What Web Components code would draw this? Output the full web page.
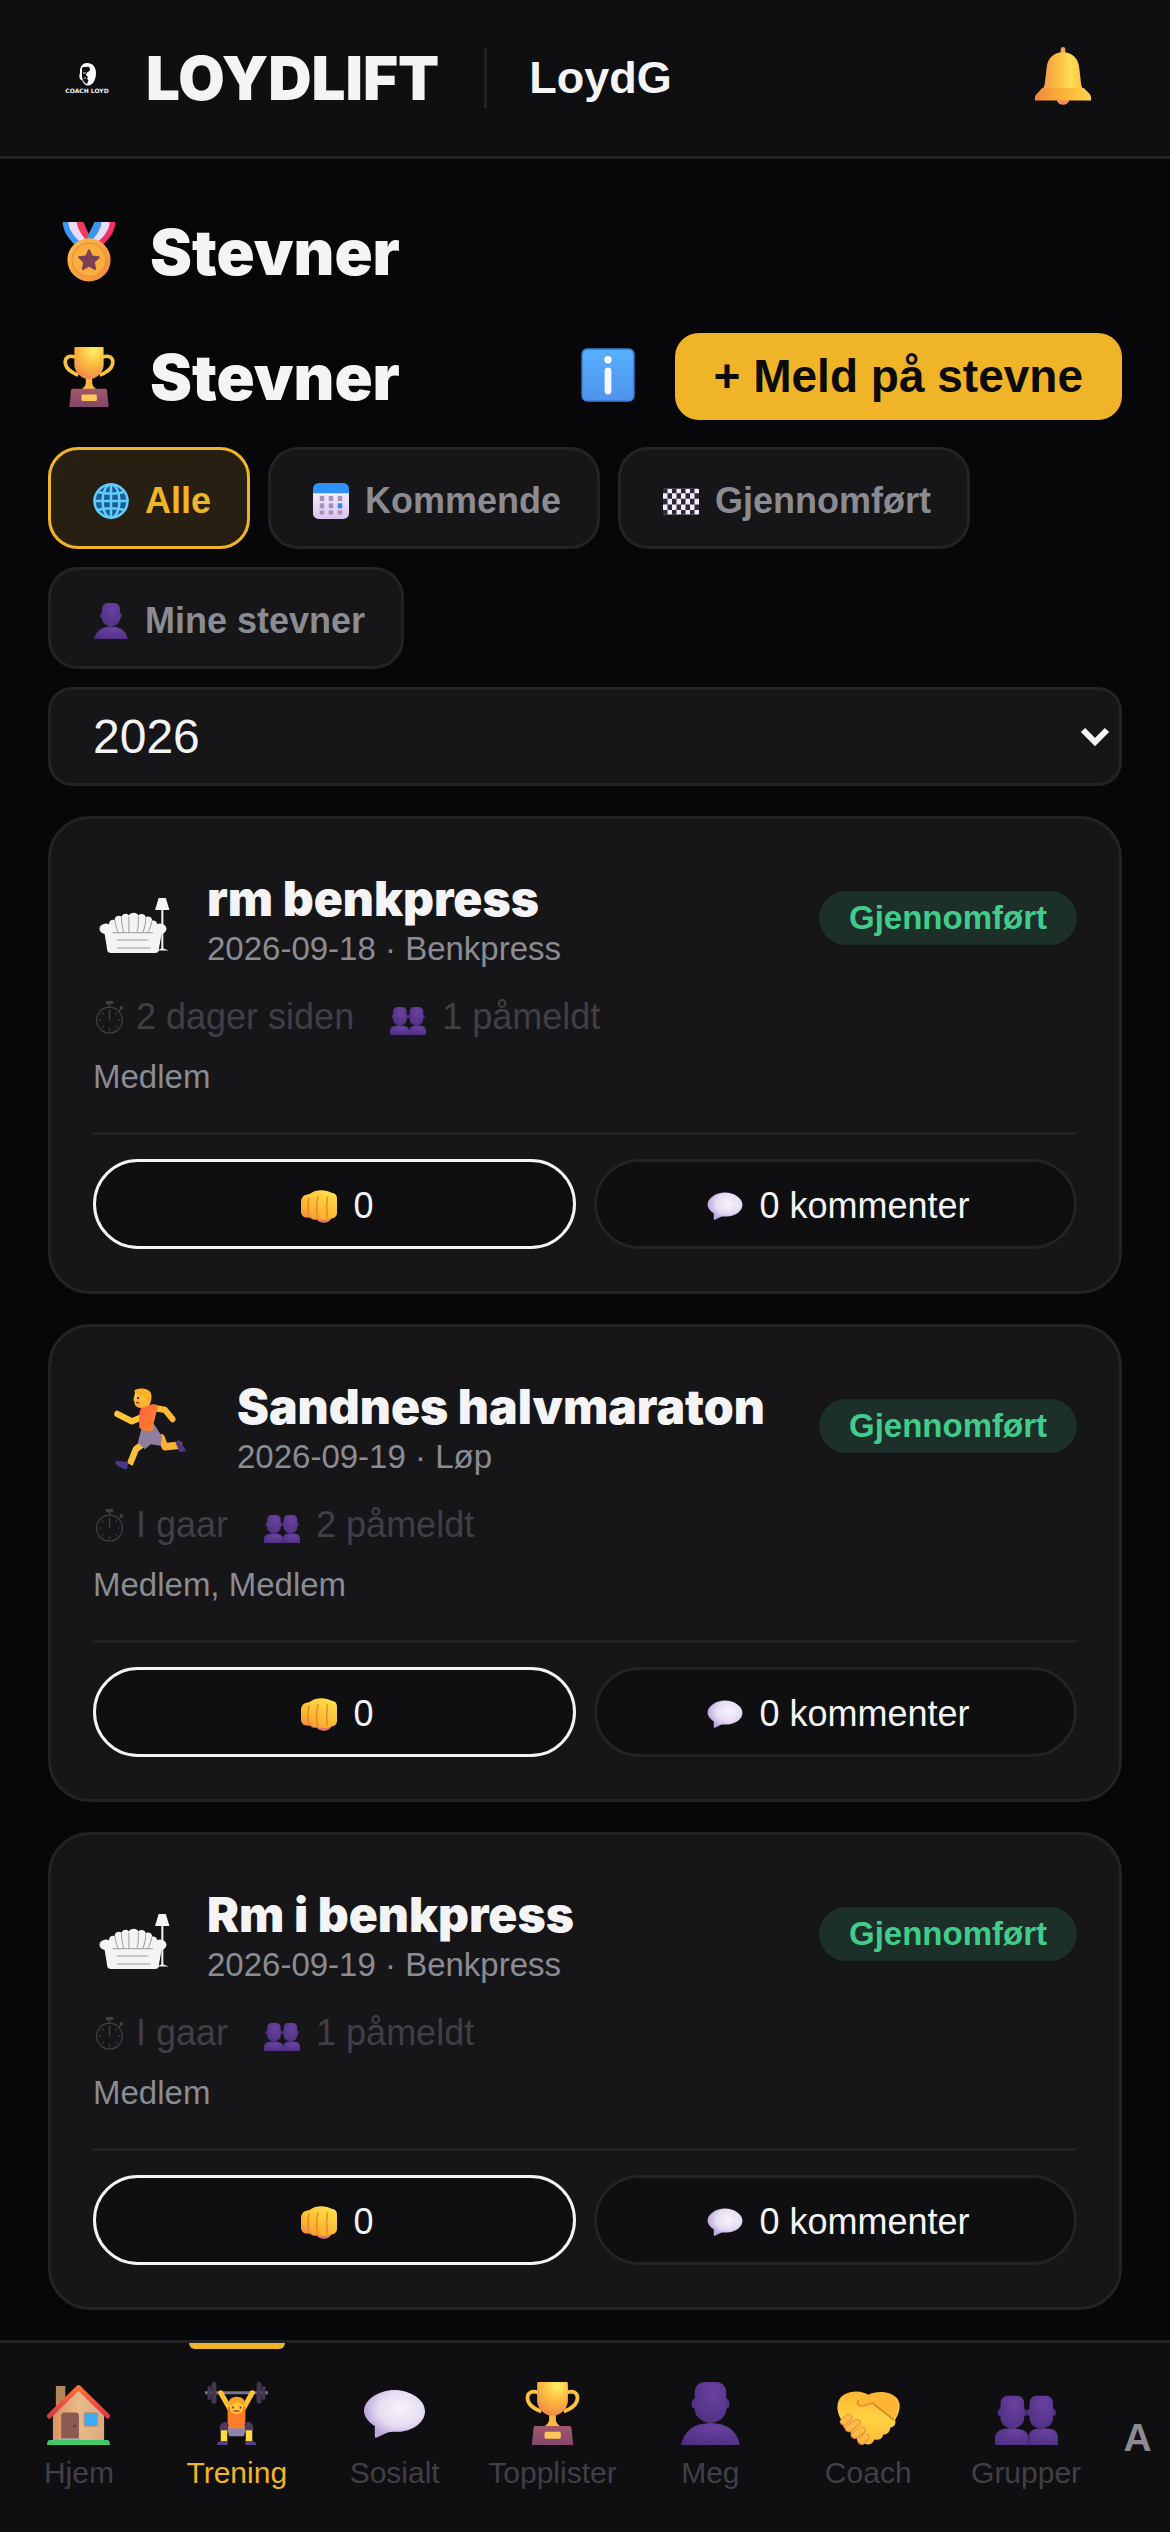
<!DOCTYPE html>
<html lang="no">
<head>
<meta charset="utf-8">
<meta name="viewport" content="width=device-width, initial-scale=1">
<title>Loydlift - Stevner</title>
<style>
  :root {
    --bg: #070709;
    --bar: #0f0f11;
    --card: #161618;
    --line: #232326;
    --text: #f4f4f6;
    --muted: #8b8b93;
    --dim: #3f3f45;
    --accent: #f0b429;
    --display: Inter, "Arial Black", "Liberation Sans", sans-serif;
  }
  body {
    margin: 0;
    background: var(--bg);
    color: var(--text);
    font-family: "Liberation Sans", Arial, sans-serif;
  }
</style>
</head>
<body>
<loyd-app></loyd-app>

<script>
const ICONS = {
  bell: `
    <defs>
      <linearGradient id="a" x1="0" x2="1"><stop offset="0" stop-color="#ef9256"/><stop offset=".3" stop-color="#f9b341"/><stop offset=".65" stop-color="#ffdd55"/><stop offset="1" stop-color="#fbb93a"/></linearGradient>
      <linearGradient id="b" x1="0" x2="1"><stop offset="0" stop-color="#f0873f"/><stop offset=".5" stop-color="#fbb237"/><stop offset="1" stop-color="#ffd34a"/></linearGradient>
    </defs>
    <path d="M12.500 28.500a3.600 3.700 0 0 0 7 0z" fill="#ef8a5a"/>
    <rect x="14.700" y="-.5" width="2.600" height="5" rx="1.300" fill="#f5a73c"/>
    <path d="M16 2.300c4.800 0 8.300 3 8.900 8.200l1 8.500c.3 3 1.400 4 3.300 6.500H2.800c2.200-2.600 3-4.300 3.300-7.300l.9-7.500C7.500 5.300 11.200 2.300 16 2.300z" fill="url(#a)"/>
    <path d="M4.500 22h23l2.800 2.900c.8.800 1.200 1.700 1.200 2.600V29H.5v-1.500c0-1 .6-1.900 1.500-2.700z" fill="url(#b)"/>`,
  medal: `
    <defs>
      <linearGradient id="a" x1="0" y1="0" x2="1" y2="1"><stop offset="0" stop-color="#ffc04a"/><stop offset="1" stop-color="#f08a3c"/></linearGradient>
    </defs>
    <path d="M2 0h4l9 11-4.500 3C5.500 10 2 5 2 0z" fill="#3f94f0"/>
    <path d="M5 0h5.500l6 11-3 1C8.500 9 5 4 5 0z" fill="#e9dcfb"/>
    <path d="M9.500 0H13l4 9-1.500 2C12 7 9.500 3 9.500 0z" fill="#f2375e"/>
    <path d="M30 0h-4L16.500 11l4.500 3c5.500-4 9-9 9-14z" fill="#f62f68"/>
    <path d="M27 0h-5.500l-6 11 3 1c5-3 8.500-8 8.500-12z" fill="#e9dcfb"/>
    <path d="M22.500 0H19l-4 8 1.500 3c3.500-4 6-7 6-11z" fill="#3f94f0"/>
    <circle cx="16" cy="20.200" r="11.500" fill="url(#a)"/>
    <circle cx="16" cy="20.200" r="9" fill="#fbae40" stroke="#e8923c" stroke-width=".7"/>
    <path d="m16 15 1.600 3.400 3.700.4-2.700 2.600.7 3.700-3.300-1.800-3.300 1.800.7-3.700-2.700-2.600 3.700-.4z" fill="#7c3f55" stroke="#7c3f55" stroke-width="1" stroke-linejoin="round"/>`,
  trophy: `
    <defs>
      <radialGradient id="a" cx=".65" cy=".1" r=".9"><stop offset="0" stop-color="#fff06a"/><stop offset=".55" stop-color="#fcb73c"/><stop offset="1" stop-color="#ee8c4d"/></radialGradient>
      <linearGradient id="b" x1="0" y1="0" x2="0" y2="1"><stop offset="0" stop-color="#a3586a"/><stop offset="1" stop-color="#83466a"/></linearGradient>
    </defs>
    <path d="M9 5.500C5.500 4 3.300 5.500 3.300 8c0 3.500 3 5.500 7 7M23 5.500c3.500-1.500 5.700 0 5.700 2.500 0 3.500-3 5.500-7 7" fill="none" stroke="#fcc23f" stroke-width="1.900"/>
    <path d="M14.300 15h3.400v4c0 1.600 1.500 3 3 4h-9.400c1.500-1 3-2.400 3-4z" fill="#fbb93e"/>
    <path d="M9 0h14c.5 0 .8.300.8.700V10c-.4 4-4.300 7.200-7.800 7.200S8.600 14 8.200 10V.7C8.200.3 8.500 0 9 0z" fill="url(#a)"/>
    <path d="M7.500 22.300h17c.7 0 1 .3 1.100.8L26.500 32h-21l.9-8.900c.1-.5.400-.8 1.100-.8z" fill="url(#b)"/>
    <rect x="12" y="25.300" width="8.200" height="3.500" rx=".7" fill="#fdc65a"/>`,
  info: `
    <defs><linearGradient id="a" x1="0" y1="0" x2="0" y2="1"><stop offset="0" stop-color="#57b0ff"/><stop offset="1" stop-color="#4f93ec"/></linearGradient></defs>
    <rect x=".7" y=".7" width="30.600" height="30.600" rx="3" fill="url(#a)" stroke="#3f7fd8" stroke-width="1"/>
    <circle cx="16" cy="7" r="2.200" fill="#fff"/>
    <rect x="14" y="11.500" width="4" height="16" rx="2" fill="#f4f7ff"/>`,
  globe: `
    <circle cx="16" cy="16" r="15.500" fill="#1b5f96"/>
    <g fill="none" stroke="#62cdfb" stroke-width="2.200">
      <circle cx="16" cy="16" r="14.700"/>
      <ellipse cx="16" cy="16" rx="7.500" ry="14.700"/>
      <path d="M16 1v30M1 16h30M4 8q12 3 24 0M4 24q12-3 24 0"/>
    </g>`,
  calendar: `
    <defs><linearGradient id="a" x1="0" y1="0" x2="0" y2="1"><stop offset="0" stop-color="#f3eefb"/><stop offset="1" stop-color="#dcc3f0"/></linearGradient></defs>
    <path d="M0 8h32v19a5 5 0 0 1-5 5H5a5 5 0 0 1-5-5z" fill="url(#a)"/>
    <path d="M5 0h22a5 5 0 0 1 5 5v4H0V5a5 5 0 0 1 5-5z" fill="#2f92fb"/>
    <g fill="#a594b8"><path d="M6 11.500h4V16H6zM14 11.500h4V16h-4zM22 11.500h4V16h-4zM6 18h4v4.500H6zM14 18h4v4.500h-4zM6 24.500h4V28H6zM14 24.500h4V28h-4zM22 24.500h4V28h-4z"/></g>
    <path d="M22 18h4v4.500h-4z" fill="#2a8af0"/>`,
  flag: `
    <rect y="5" width="32" height="23" rx="1" fill="#f3ecfa"/>
    <path fill="#2f2838" d="M0 5h4v4H0zM8 5h4v4H8zM16 5h4v4h-4zM24 5h4v4h-4zM4 9h4v5H4zM12 9h4v5h-4zM20 9h4v5h-4zM28 9h4v5h-4zM0 14h4v5H0zM8 14h4v5H8zM16 14h4v5h-4zM24 14h4v5h-4zM4 19h4v5H4zM12 19h4v5h-4zM20 19h4v5h-4zM28 19h4v5h-4zM0 24h4v4H0zM8 24h4v4H8zM16 24h4v4h-4zM24 24h4v4h-4z"/>`,
  person: `
    <defs><radialGradient id="a" cx=".6" cy=".25" r=".9"><stop offset="0" stop-color="#6a42a0"/><stop offset="1" stop-color="#4d2e80"/></radialGradient></defs>
    <path d="M1 32c1.500-7 6.500-11.200 15-11.200S29.500 25 31 32z" fill="url(#a)"/>
    <ellipse cx="7.900" cy="11" rx="1.500" ry="2.500" fill="#50308a"/>
    <ellipse cx="24.100" cy="11" rx="1.500" ry="2.500" fill="#50308a"/>
    <path d="M13.500 0h5C22 0 24 2.300 24 5.500V14c0 4-4.500 6.800-8 6.800S8 18 8 14V5.500C8 2.300 10 0 13.500 0z" fill="url(#a)"/>`,
  people: `
    <defs><radialGradient id="a" cx=".6" cy=".25" r=".9"><stop offset="0" stop-color="#6a42a0"/><stop offset="1" stop-color="#4d2e80"/></radialGradient></defs>
    <path d="M0 32v-3.500C0 25 3 23.500 8.500 23.500s8.500 1.500 8.500 5V32z" fill="url(#a)"/>
    <path d="M17 32v-3.500c0-3.500 2-5 7.500-5s7.500 1.500 7.500 5V32z" fill="url(#a)"/>
    <g fill="#50308a"><ellipse cx="2.600" cy="15.500" rx="1.200" ry="1.800"/><ellipse cx="15" cy="15.500" rx="1.200" ry="1.800"/><ellipse cx="17.300" cy="15.500" rx="1.200" ry="1.800"/><ellipse cx="29.700" cy="15.500" rx="1.200" ry="1.800"/></g>
    <path d="M6.700 7h4.200c2.500 0 3.900 1.600 3.900 4v7.500c0 3-3.200 5-6 5s-6-2-6-5V11c0-2.400 1.400-4 3.900-4z" fill="url(#a)"/>
    <path d="M21.400 7h4.200c2.500 0 3.900 1.600 3.900 4v7.500c0 3-3.200 5-6 5s-6-2-6-5V11c0-2.400 1.400-4 3.900-4z" fill="url(#a)"/>`,
  stopwatch: `
    <g fill="none" stroke="currentColor" stroke-width="1.200">
      <circle cx="16" cy="18.500" r="12.500"/>
      <path d="M16 9v10M16 6V2M25.500 9.500l2.500-2.800"/>
      <path d="M16 26v3M6 18.500h2M24 18.500h2M9 11.500l1.300 1.300M23 11.500l-1.300 1.300M9 25.500l1.300-1.300M23 25.500l-1.300-1.300"/>
    </g>
    <rect x="12.500" y="0" width="7" height="3" fill="currentColor"/>
    <circle cx="27.500" cy="6.500" r="1.700" fill="currentColor"/>`,
  sofa: `
    <g transform="translate(0 2.800) scale(1 .78)">
    <g fill="#f4f4f6">
      <path d="M26.500 5.500h3.200l1.600 6.800h-6.400z"/>
      <path d="M27.700 12h.9v23h-.9z"/><path d="M25.800 35.500l1.800-1.200h1.100l2.300 1.200z"/>
      <path d="M5.500 27C4 20 4 17.500 7 18c0-2.500 2-2.800 3-1.800.4-2.200 2.700-2.200 3.300-.7.600-2 3.600-2 4.200 0 .8-1.500 3-1 3.300.9 1.200-.8 2.900.1 2.800 1.900 2.700-.3 2.900 2.700 1.400 8.700z"/>
      <circle cx="3.200" cy="23" r="3"/><circle cx="27" cy="23" r="3"/>
      <path d="M2.300 24.500 6 25h18.500l3.500-.5-1.500 11c-.1.800-.5 1.300-1.200 1.300H5c-.7 0-1.200-.5-1.300-1.300z"/>
    </g>
    <path d="M7 18c.3 2.500.8 5 1.500 7M10 16.500c0 3 .4 6 1 8.500M13.300 16v9M17.500 15.800c0 3 0 6-.5 9M20.800 16.700c0 3-.5 6-1.300 8.300M23.500 18.500c-.3 2.500-1 5-1.800 6.500M6 25.300h18M8 29.500h14M8 34h15" fill="none" stroke="#77777c" stroke-width=".35"/>
    </g>`,
  runner: `
    <defs>
      <linearGradient id="a" x1="0" y1="0" x2="1" y2="1"><stop offset="0" stop-color="#ff5f3f"/><stop offset="1" stop-color="#fb8a2b"/></linearGradient>
      <linearGradient id="b" x1="0" y1="0" x2="0" y2="1"><stop offset="0" stop-color="#ffd53d"/><stop offset="1" stop-color="#f8a932"/></linearGradient>
    </defs>
    <g transform="translate(1 1) scale(.92 1)">
    <path d="M21 19.500l1.500 3.500 6-.6" fill="none" stroke="#f9b137" stroke-width="2.900" stroke-linejoin="round" stroke-linecap="round"/>
    <path d="M13.500 21.500 10 24l-2.600 6" fill="none" stroke="#fbc03a" stroke-width="2.700" stroke-linejoin="round"/>
    <path d="m28.600 20.200 3.100 4.600-3 .2-1.700-3.800z" fill="#4c3a86"/>
    <path d="M1.300 28.600 6.800 29l-.6 3c-2-.4-4-1.200-4.900-2.300z" fill="#4c3a86"/>
    <path d="m12.500 15.500 5.300-1.500 3.500 5-.6 3.600-4.300-.6-2.500 2-3-2.600z" fill="#8f7f9d"/>
    <path d="m17.500 7.600 5 .8 3.300 3.700" fill="none" stroke="#fcbb36" stroke-width="2.500" stroke-linejoin="round" stroke-linecap="round"/>
    <path d="M12 11.500 8.300 13 2 10" fill="none" stroke="#ffc638" stroke-width="2.500" stroke-linejoin="round" stroke-linecap="round"/>
    <path d="m13 6.700 5-.5c1.300 0 1.500 1 1.200 2L17.300 15l.5 1.200c-2.500 1-4.800.8-6.300-.8 0-4-.5-6.700 1.500-8.700z" fill="url(#a)"/>
    <path d="M9.800 1h5.400v5.500c-1.500 1.500-4.500 1.600-5.500 0L9 4.300z" fill="url(#b)"/>
    <path d="M9.300.8c1.500-1.200 6-1.200 7.200 1 .5 1.600.2 4-1.200 5.200-.8 0-1.400-1.800-1.400-3.500-1.700-.3-4-.6-4.600-2.700z" fill="#ffb229"/>
    <circle cx="11" cy="3.700" r=".5" fill="#47306b"/>
    <path d="m10 5.500 1.500.2" stroke="#b02a4a" stroke-width=".6"/>
    </g>`,
  fist: `
    <defs><linearGradient id="a" x1=".8" y1="0" x2=".2" y2="1"><stop offset="0" stop-color="#ffe04a"/><stop offset=".7" stop-color="#fdb22e"/><stop offset="1" stop-color="#ee8155"/></linearGradient></defs>
    <path d="M8 5C13 1 22 1 28 4.500c3 .5 4 2.500 4 5V22c0 3-2 5-5 5-2 3-10 5-13 1-3 .5-5 0-6-2-5 1-8-1.500-8-5v-8C0 9 2 6.500 5 6z" fill="url(#a)"/>
    <path d="M7 9c-1 5-1 11 0 17M15 8c-1.500 6-1.500 13 0 19M23.500 8c-1 6-1 12 0 18" fill="none" stroke="#e58a2a" stroke-width="1.300" stroke-linecap="round"/>
    <path d="M14 27.500c4 1.500 9 1 13-.5-2 4-9 6-13 .5z" fill="#e0766b"/>`,
  bubble: `
    <defs><radialGradient id="a" cx=".6" cy=".4" r=".6"><stop offset="0" stop-color="#f6f3fb"/><stop offset=".6" stop-color="#e6ddf3"/><stop offset="1" stop-color="#bba7dd"/></radialGradient></defs>
    <path d="M16 4c8 0 15.500 5 15.500 10.800C31.500 21 24.500 25 18 25.300c-2 0-4-.2-5.500.3L7 28.200c-.7.300-1 0-1-.8v-5C3 20.500.5 17.500.5 14.800.5 9 8 4 16 4z" fill="url(#a)"/>`,
  home: `
    <defs>
      <linearGradient id="a" x1="0" x2="1"><stop offset="0" stop-color="#d99562"/><stop offset=".5" stop-color="#e8ba8a"/><stop offset="1" stop-color="#dca87f"/></linearGradient>
      <linearGradient id="b" x1="0" y1="0" x2="0" y2="1"><stop offset="0" stop-color="#f9713c"/><stop offset="1" stop-color="#de3745"/></linearGradient>
    </defs>
    <path d="M4.500 2h4.800v12H4.500z" fill="#b0875c"/>
    <path d="M3 15 16 3l13 12v15H3z" fill="url(#a)"/>
    <path d="M1.200 17.300 16 2.800l14.800 14.500" fill="none" stroke="url(#b)" stroke-width="2.500" stroke-linejoin="round" stroke-linecap="round"/>
    <path d="M8.700 15.500h6c.9 0 1.500.6 1.500 1.500v12.500h-9V17c0-.9.600-1.500 1.500-1.500z" fill="#8b5a50"/>
    <circle cx="14" cy="22.500" r=".8" fill="#6b3f44"/>
    <rect x="18.800" y="15.500" width="7" height="7" rx="1" fill="#3caaf5" stroke="#cf9465" stroke-width=".6"/>
    <path d="M6.500 28.600h10.700v1.400H6.500z" fill="#b9a8ad"/>
    <path d="M1.500 29.500h29c1 0 1.500 1 1.500 2.500H0c0-1.500.5-2.500 1.500-2.500z" fill="#40c96b"/>`,
  lifter: `
    <path d="M0 5.500h32" stroke="#7d7489" stroke-width="1.500"/>
    <g fill="#423650"><rect x="3.300" y="0" width="2.500" height="11" rx="1"/><rect x="1.300" y="2" width="1.800" height="7" rx=".8"/><rect x="26.200" y="0" width="2.500" height="11" rx="1"/><rect x="28.900" y="2" width="1.800" height="7" rx=".8"/></g>
    <path d="m8 5.500 4.500 8M24 5.500l-4.500 8" stroke="#ffc233" stroke-width="2.600" stroke-linecap="round"/>
    <path d="M11.500 12.500 16 14l4.500-1.500V24h-9z" fill="#fb7d28"/>
    <path d="M11 23.500h10l-1.300 4h-7.400z" fill="#9184ab"/>
    <path d="M7.500 23c0-2.500 3.500-3.800 4.500-1.500l-.5 3.500-4-.5zM24.500 23c0-2.500-3.500-3.800-4.500-1.500l.5 3.500 4-.5z" fill="#473a63"/>
    <path d="M8 24.500h3.300v6H8zM20.700 24.500H24v6h-3.300z" fill="#ffdb43"/>
    <path d="M6 32c0-1.300 1-2 2-2h3.500v2zM26 32c0-1.300-1-2-2-2h-3.500v2z" fill="#4d4188"/>
    <rect x="12.700" y="8" width="6.600" height="8.300" rx="3" fill="#ffc733"/>
    <path d="M12.200 12c-.8-2.500 1-4.500 4-4.500s4.700 2 3.700 4.500c-1.500-.8-2.300-1.700-3-1.700-1.300 0-2.500 1.500-4.700 1.700z" fill="#f9a32b"/>
    <path d="M14.200 12.500v.9M18 12.500v.9" stroke="#4b2c52" stroke-width=".8"/>
    <path d="M14.500 14.700h3" stroke="#c2433f" stroke-width=".8"/>`,
  handshake: `
    <defs><linearGradient id="a" x1="0" y1="0" x2="0" y2="1"><stop offset="0" stop-color="#fbb533"/><stop offset=".5" stop-color="#ffd343"/><stop offset="1" stop-color="#fcb836"/></linearGradient></defs>
    <g transform="translate(0 4.700) scale(1 .86)">
    <path d="M16 2C20-.5 28-.5 31 5c2 4 0 9-1.500 12 .5 2 0 4-2.500 4.500 0 3-2 4-3.500 4-.5 3-3 3.500-4.500 3-1 3-3 3.500-5 2.500-3 0-4-1.500-4-3.500-2 0-3.500-2-3-4-3-.5-4.500-3-4-5.500C-.5 13-1 5 3.500 2 8-1 13 0 16 2z" fill="url(#a)"/>
    <path d="M11 5.500c3-2.500 8-4.500 14-3.500 5 1 8 8 4 14L18 7l-4 1.500c-2.500.7-4.500-1.500-3-3z" fill="#fcb633"/>
    <path d="m18 7 11 10" stroke="#c97b25" stroke-width=".8" fill="none"/>
    <path d="M11 5.500c-1.500 1.500 0 4 3 3L18 7" stroke="#db8e2b" stroke-width=".8" fill="none"/>
    <g stroke="#e88f43" stroke-width="4.200" stroke-linecap="round"><path d="m3.500 18 2.500-2.500M6 22l4-3.500M9 26l3.500-3M12.500 29.500 14.500 27"/></g>
    <g stroke="#ffba45" stroke-width="3.200" stroke-linecap="round"><path d="m3.600 17.800 2.300-2.300M6.200 21.700l3.700-3.200M9.200 25.700l3.200-2.700M12.700 29.200l1.700-2.200"/></g>
    </g>`
};

class AppIcon extends HTMLElement {
  constructor() {
    super();
    this.shadowDOM = this.attachShadow({mode: 'open'});
  }
  connectedCallback() {
    this.shadowDOM.innerHTML = `
    <style>
    :host { display: inline-flex; flex: none; align-items: center; justify-content: center; width: var(--slot, auto); }
    svg { display: block; width: var(--icon, 36px); height: var(--icon, 36px); overflow: visible; }
    </style>
    <svg viewBox="0 0 32 32" aria-hidden="true">${ICONS[this.getAttribute('name')]}</svg>
    `;
  }
}

class TopBar extends HTMLElement {
  constructor() {
    super();
    this.shadowDOM = this.attachShadow({mode: 'open'});
  }
  connectedCallback() {
    this.shadowDOM.innerHTML = `
    <style>
    :host { display: block; background: var(--bar); border-bottom: 3px solid var(--line); }
    header { display: flex; align-items: center; height: 156px; padding: 0 48px; }
    .logo {
      display: flex;
      flex-direction: column;
      align-items: center;
      gap: 2px;
      width: 78px;
      margin-right: 20px;
      font: bold 6px/6px "DejaVu Sans", sans-serif;
      white-space: nowrap;
    }
    .logo svg { width: 18px; height: 23px; }
    .brand { font: 900 60px/66px var(--display); }
    .user {
      margin-left: 45px;
      padding-left: 42px;
      border-left: 3px solid var(--line);
      font-size: 45px;
      line-height: 60px;
      font-weight: bold;
    }
    button {
      width: 118px;
      margin-left: auto;
      padding: 0;
      border: 0;
      background: none;
      --icon: 58px;
    }
    </style>
    <header>
      <div class="logo">
        <svg viewBox="0 0 18 23" aria-hidden="true">
          <path d="M9 0c5.500 0 9 4 9 10 0 7-3.500 12.500-8 12.500-2.500 0-5-2-6-5.500-1 .5-2.500-1-2.500-3S1 11 2 10.500C1.500 4.500 4 0 9 0z" fill="#fff"/>
          <path d="M4 5c2-2 4 0 6-1.500 2 .5 2.500 2.500 1.500 4.500L9 9.500 8 12l2 2-1 1.500 1.500 2L9 21c-3-1-4.500-4-5-7.500z" fill="#121214"/>
          <path d="M5 10h3M6 15h2" stroke="#ddd" stroke-width="1"/>
        </svg>
        <span>COACH LOYD</span>
      </div>
      <div class="brand">LOYDLIFT</div>
      <div class="user">LoydG</div>
      <button type="button" aria-label="Varsler"><app-icon name="bell"></app-icon></button>
    </header>
    `;
  }
}

class PageTitle extends HTMLElement {
  constructor() {
    super();
    this.shadowDOM = this.attachShadow({mode: 'open'});
  }
  connectedCallback() {
    this.shadowDOM.innerHTML = `
    <style>
    :host { display: flex; align-items: center; min-height: 84px; }
    app-icon { --icon: 60px; --slot: 82px; }
    h1 { margin: 0 auto 0 20px; font: 900 63px/84px var(--display); }
    </style>
    <app-icon name="${this.getAttribute('icon')}"></app-icon>
    <h1>${this.getAttribute('label')}</h1>
    <slot></slot>
    `;
  }
}

class FilterChip extends HTMLElement {
  constructor() {
    super();
    this.shadowDOM = this.attachShadow({mode: 'open'});
  }
  connectedCallback() {
    this.shadowDOM.innerHTML = `
    <style>
    :host { display: block; }
    button {
      display: flex;
      align-items: center;
      gap: 10px;
      padding: 28px 36px 23px;
      border: 3px solid var(--line);
      border-radius: 30px;
      background: var(--card);
      color: var(--muted);
      font: bold 36px/45px "Liberation Sans", Arial, sans-serif;
    }
    :host([active]) button { border-color: var(--accent); background: #271f12; color: var(--accent); }
    app-icon { --slot: 48px; }
    </style>
    <button type="button" aria-pressed="${this.hasAttribute('active')}">
      <app-icon name="${this.getAttribute('icon')}"></app-icon><slot></slot>
    </button>
    `;
  }
}

class YearSelect extends HTMLElement {
  constructor() {
    super();
    this.shadowDOM = this.attachShadow({mode: 'open'});
  }
  connectedCallback() {
    this.shadowDOM.innerHTML = `
    <style>
    :host { display: grid; align-items: center; }
    select, svg { grid-area: 1 / 1; }
    select {
      appearance: none;
      width: 100%;
      height: 99px;
      padding: 0 42px;
      border: 3px solid var(--line);
      border-radius: 24px;
      background: var(--card);
      color: var(--text);
      font: 48px "Liberation Sans", Arial, sans-serif;
    }
    svg { justify-self: end; margin-right: 12px; width: 30px; height: 24px; pointer-events: none; }
    </style>
    <select aria-label="År"><option>2026</option></select>
    <svg viewBox="0 0 30 24" aria-hidden="true"><path d="m3 5 12 12L27 5" fill="none" stroke="#f4f4f6" stroke-width="6"/></svg>
    `;
  }
}

class MeetCard extends HTMLElement {
  constructor() {
    super();
    this.shadowDOM = this.attachShadow({mode: 'open'});
  }
  connectedCallback() {
    const get = name => this.getAttribute(name);
    this.shadowDOM.innerHTML = `
    <style>
    :host {
      display: block;
      padding: 42px;
      border: 3px solid var(--line);
      border-radius: 42px;
      background: var(--card);
    }
    .head { display: flex; align-items: center; gap: 30px; height: 114px; }
    .sofa { --icon: 72px; --slot: 84px; }
    .runner { --icon: 81px; --slot: 114px; }
    .names { flex: 1; }
    h2 { margin: 0 0 6px; font: 900 48px/54px var(--display); white-space: nowrap; }
    .sub { color: var(--muted); font-size: 33px; line-height: 33px; }
    .badge {
      padding: 0 30px;
      border-radius: 27px;
      background: #1d2f29;
      color: #42cc8c;
      font-size: 33px;
      line-height: 54px;
      font-weight: bold;
    }
    .meta {
      display: flex;
      gap: 30px;
      margin: 18px 0;
      color: var(--dim);
      font-size: 36px;
      line-height: 48px;
    }
    .meta span { display: flex; align-items: center; gap: 10px; }
    .clock { --icon: 33px; --slot: 33px; }
    .people { --slot: 48px; }
    .members { margin: 0 0 37px; color: var(--muted); font-size: 33px; line-height: 36px; }
    .actions { display: flex; gap: 18px; padding-top: 24px; border-top: 3px solid var(--line); }
    button {
      flex: 1;
      display: flex;
      align-items: center;
      justify-content: center;
      gap: 10px;
      height: 90px;
      padding: 3px 0 0;
      border: 3px solid var(--line);
      border-radius: 45px;
      background: var(--bar);
      color: var(--text);
      font: 36px "Liberation Sans", Arial, sans-serif;
      --slot: 48px;
    }
    .cheer { border-color: var(--text); }
    </style>
    <div class="head">
      <app-icon class="${get('icon')}" name="${get('icon')}"></app-icon>
      <div class="names">
        <h2>${get('label')}</h2>
        <div class="sub">${get('date')} · ${get('sport')}</div>
      </div>
      <div class="badge">Gjennomført</div>
    </div>
    <div class="meta">
      <span><app-icon class="clock" name="stopwatch"></app-icon>${get('when')}</span>
      <span><app-icon class="people" name="people"></app-icon>${get('count')} påmeldt</span>
    </div>
    <p class="members"><slot></slot></p>
    <div class="actions">
      <button type="button" class="cheer"><app-icon name="fist"></app-icon>0</button>
      <button type="button"><app-icon name="bubble"></app-icon>0 kommenter</button>
    </div>
    `;
  }
}

class NavItem extends HTMLElement {
  constructor() {
    super();
    this.shadowDOM = this.attachShadow({mode: 'open'});
  }
  connectedCallback() {
    this.shadowDOM.innerHTML = `
    <style>
    :host { display: block; flex: 1; min-width: 0; }
    a {
      display: flex;
      flex-direction: column;
      align-items: center;
      gap: 10px;
      color: var(--dim);
      font-size: 30px;
      line-height: 36px;
      text-decoration: none;
      --icon: 63px;
    }
    a::before { content: ""; width: 96px; height: 6px; margin-bottom: 23px; border-radius: 0 0 6px 6px; }
    :host([active]) a { color: var(--accent); }
    :host([active]) a::before { background: var(--accent); }
    </style>
    <a href="#"><app-icon name="${this.getAttribute('icon')}"></app-icon><slot></slot></a>
    `;
  }
}

class LoydApp extends HTMLElement {
  constructor() {
    super();
    this.shadowDOM = this.attachShadow({mode: 'open'});
  }
  connectedCallback() {
    this.shadowDOM.innerHTML = `
    <style>
    :host { display: flex; flex-direction: column; min-height: 100vh; }
    main { flex: 1; padding: 51px 48px 30px; }
    .meets-title { margin: 39px 0 27px; }
    .info { margin-right: 40px; padding: 0; border: 0; background: none; --icon: 54px; }
    .add {
      padding: 0 39px;
      border: 0;
      border-radius: 24px;
      background: var(--accent);
      color: #0b0b0c;
      font: bold 46px/87px "Liberation Sans", Arial, sans-serif;
    }
    .filters { display: flex; flex-wrap: wrap; gap: 18px; margin-bottom: 18px; }
    .meets { display: grid; gap: 30px; margin-top: 30px; }
    nav {
      position: sticky;
      bottom: 0;
      display: flex;
      height: 189px;
      border-top: 3px solid var(--line);
      background: var(--bar);
    }
    .more {
      width: 65px;
      padding: 0;
      border: 0;
      background: none;
      color: var(--muted);
      font: bold 39px "Liberation Sans", Arial, sans-serif;
    }
    </style>
    <top-bar></top-bar>
    <main>
      <page-title icon="medal" label="Stevner"></page-title>
      <page-title class="meets-title" icon="trophy" label="Stevner">
        <button type="button" class="info" aria-label="Info"><app-icon name="info"></app-icon></button>
        <button type="button" class="add">+ Meld på stevne</button>
      </page-title>
      <div class="filters">
        <filter-chip icon="globe" active>Alle</filter-chip>
        <filter-chip icon="calendar">Kommende</filter-chip>
        <filter-chip icon="flag">Gjennomført</filter-chip>
        <filter-chip icon="person">Mine stevner</filter-chip>
      </div>
      <year-select></year-select>
      <div class="meets">
        <meet-card icon="sofa" label="rm benkpress" date="2026-09-18" sport="Benkpress" when="2 dager siden" count="1">Medlem</meet-card>
        <meet-card icon="runner" label="Sandnes halvmaraton" date="2026-09-19" sport="Løp" when="I gaar" count="2">Medlem, Medlem</meet-card>
        <meet-card icon="sofa" label="Rm i benkpress" date="2026-09-19" sport="Benkpress" when="I gaar" count="1">Medlem</meet-card>
      </div>
    </main>
    <nav>
      <nav-item icon="home">Hjem</nav-item>
      <nav-item icon="lifter" active>Trening</nav-item>
      <nav-item icon="bubble">Sosialt</nav-item>
      <nav-item icon="trophy">Topplister</nav-item>
      <nav-item icon="person">Meg</nav-item>
      <nav-item icon="handshake">Coach</nav-item>
      <nav-item icon="people">Grupper</nav-item>
      <button type="button" class="more">A</button>
    </nav>
    `;
  }
}

customElements.define('app-icon', AppIcon);
customElements.define('top-bar', TopBar);
customElements.define('page-title', PageTitle);
customElements.define('filter-chip', FilterChip);
customElements.define('year-select', YearSelect);
customElements.define('meet-card', MeetCard);
customElements.define('nav-item', NavItem);
customElements.define('loyd-app', LoydApp);
</script>
</body>
</html>
